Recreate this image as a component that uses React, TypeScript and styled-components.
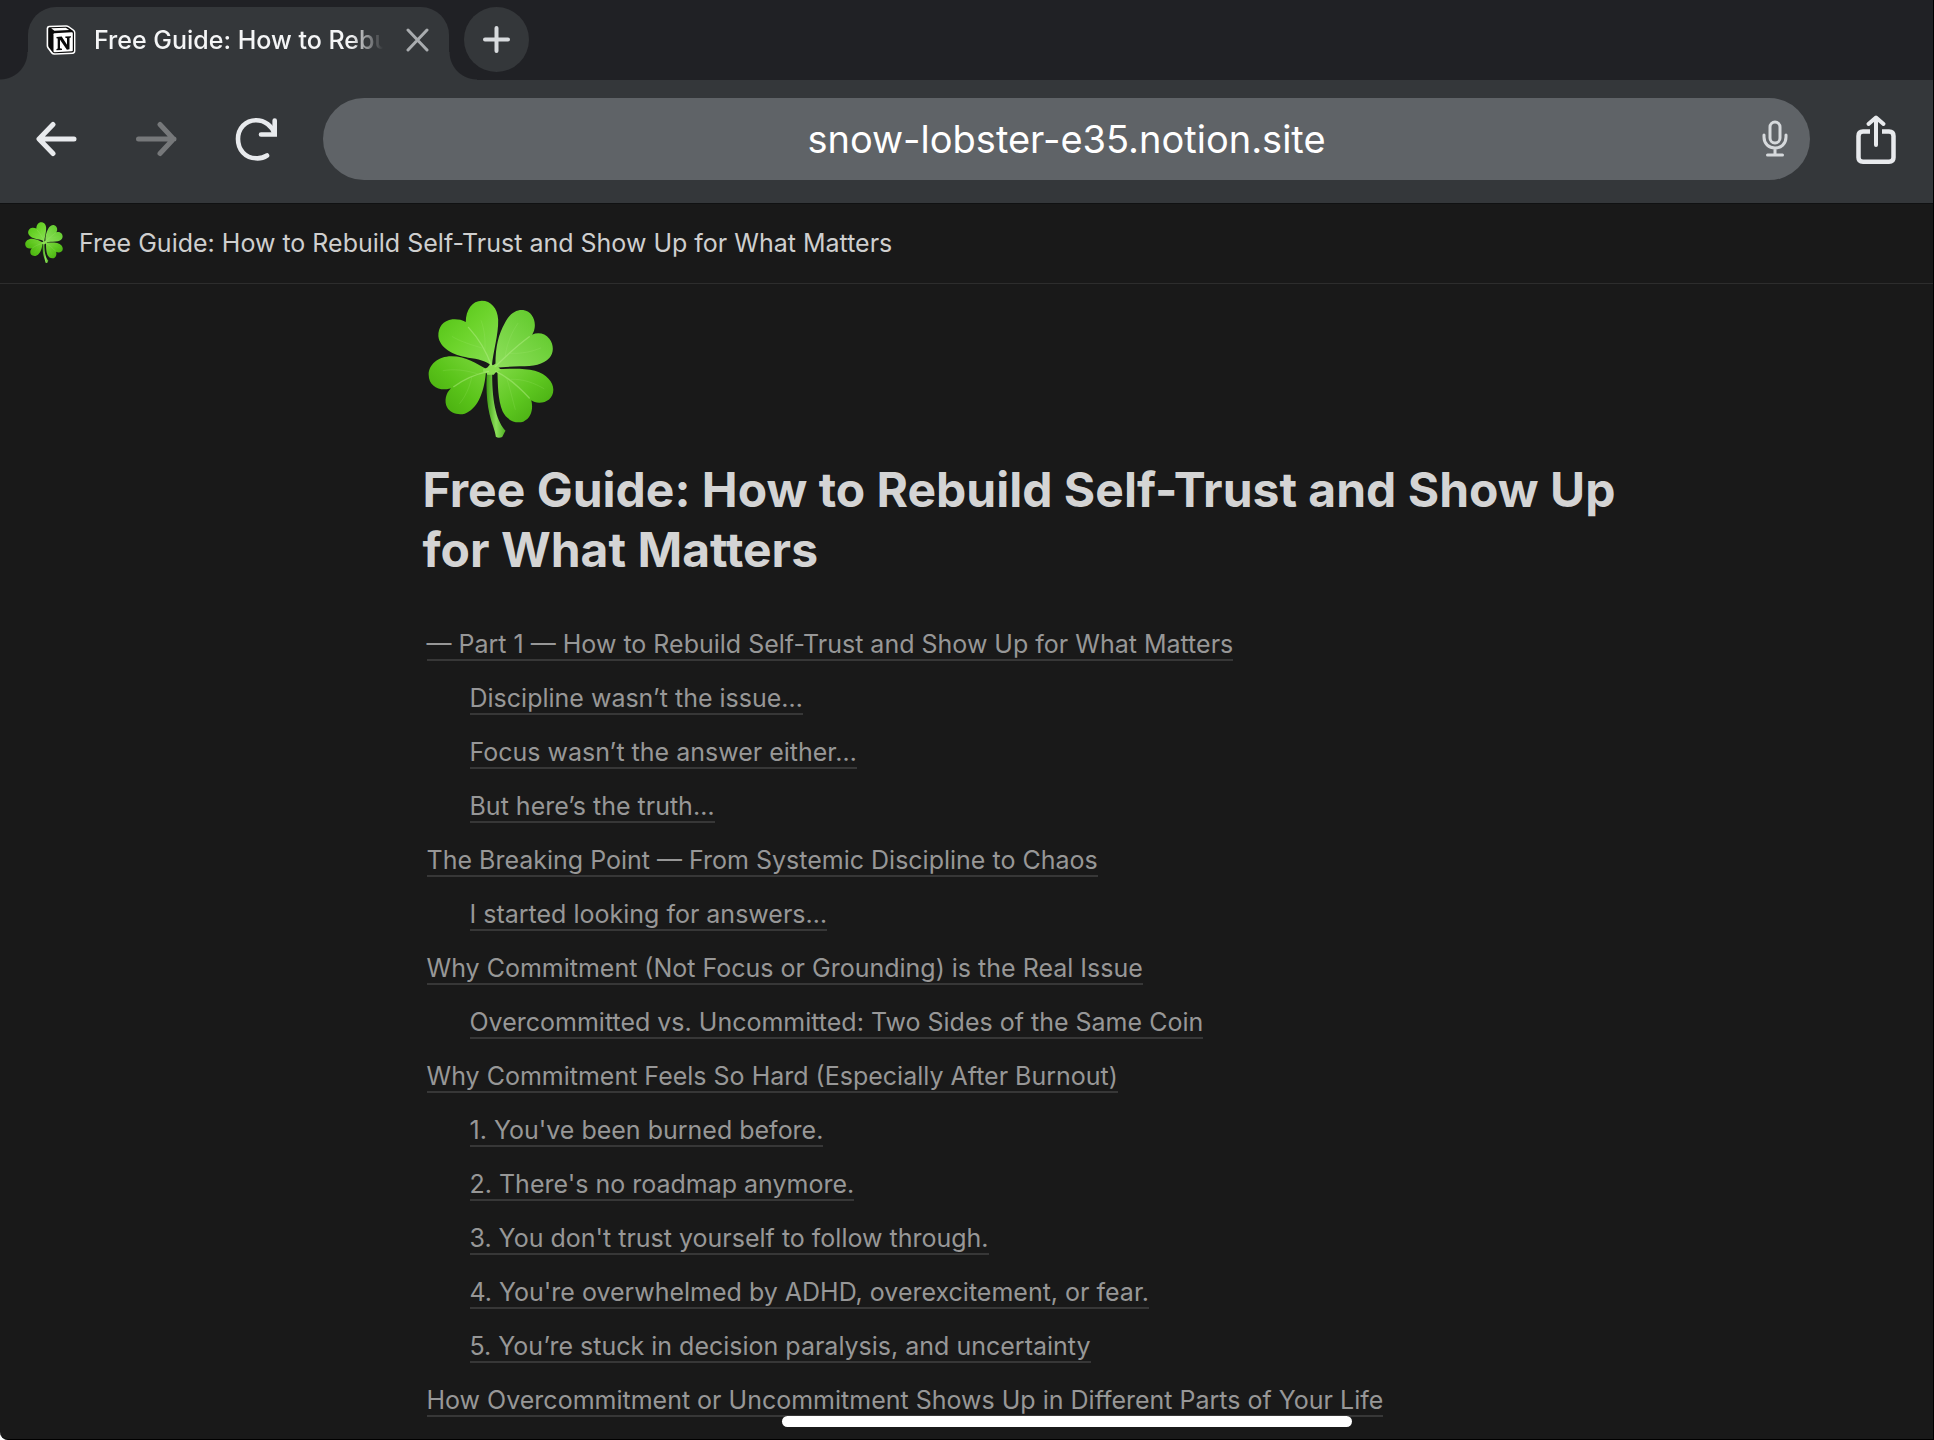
import React from "react";
import styled, { createGlobalStyle, css } from "styled-components";

const GlobalStyle = createGlobalStyle`
  *, *::before, *::after { box-sizing: border-box; }
  html, body { margin: 0; background: #fff; }
  body {
    font-family: Inter, "Liberation Sans", sans-serif;
    overflow: hidden;
  }
  button, input { font: inherit; color: inherit; margin: 0; border: 0; padding: 0; background: none; }
  button { cursor: pointer; }
`;

const Screen = styled.div`
  position: relative;
  height: 100vh;
  overflow: hidden;
  display: flex;
  flex-direction: column;
  background: #191919;
  border-right: 1px solid #000;
  border-bottom: 1px solid #000;
  border-bottom-left-radius: 8px;
`;

const TabStrip = styled.div`
  flex: none;
  display: flex;
  align-items: flex-start;
  gap: 15px;
  height: 80px;
  padding: 7px 28px 0;
  background: #202125;
`;

const Tab = styled.div`
  position: relative;
  display: flex;
  align-items: center;
  width: 421px;
  height: 73px;
  padding: 0 18px 8px;
  border-radius: 28px 28px 0 0;
  background: #34373a;
  color: #f4f5f6;

  &::before,
  &::after {
    content: "";
    position: absolute;
    bottom: 0;
    width: 28px;
    height: 28px;
  }
  &::before {
    right: 100%;
    background: radial-gradient(circle at 0 0, transparent 27px, #34373a 28px);
  }
  &::after {
    left: 100%;
    background: radial-gradient(circle at 100% 0, transparent 27px, #34373a 28px);
  }
`;

const TabTitle = styled.span`
  flex: 1;
  min-width: 0;
  margin: 0 22px 0 18px;
  overflow: hidden;
  white-space: nowrap;
  font-size: 25px;
  line-height: 32px;
  font-weight: 500;
  mask-image: linear-gradient(to right, #000 calc(100% - 32px), transparent);
`;

const IconButton = styled.button`
  flex: none;
  display: grid;
  place-items: center;
  width: ${(p: { $size: number }) => p.$size}px;
  height: ${(p: { $size: number }) => p.$size}px;
`;

const NewTab = styled(IconButton)`
  border-radius: 50%;
  background: #34373a;
`;

const Toolbar = styled.div`
  flex: none;
  display: flex;
  align-items: center;
  height: 124px;
  padding: 0 29px 5px 28px;
  background: #34373a;
  border-bottom: 1px solid #101112;
`;

const NavButtons = styled.div`
  display: flex;
  gap: 42px;
  margin-right: 37px;
`;

const Omnibox = styled.div`
  position: relative;
  flex: 1;
  display: flex;
  height: 82px;
  margin-right: 38px;
  border-radius: 41px;
  background: #5f6367;
`;

const Address = styled.input`
  flex: 1;
  min-width: 0;
  padding: 0 80px;
  border-radius: 41px;
  text-align: center;
  font-size: 38px;
  color: #fff;
  outline: none;
`;

const MicButton = styled(IconButton)`
  position: absolute;
  right: 13px;
  top: 19px;
`;

const PageBar = styled.header`
  flex: none;
  display: flex;
  align-items: center;
  gap: 16px;
  height: 80px;
  padding: 0 25px 2px;
  border-bottom: 1px solid #2d2d2d;
  color: #cfcfcf;
  font-size: 25px;
  line-height: 32px;
`;

const Page = styled.main`
  width: 1400px;
  max-width: 100%;
  margin: 0 auto;
  padding: 16px 13px 0 156px;
`;

const PageIcon = styled.div`
  padding-left: 5px;
  height: 139px;
`;

const Title = styled.h1`
  margin: 21px 0 37px;
  color: #d4d4d4;
  font-size: 48px;
  line-height: 60px;
  font-weight: 700;
`;

const Contents = styled.ul`
  margin: 0;
  padding: 0 0 0 4px;
  list-style: none;
`;

const Entry = styled.li`
  height: 54px;
  line-height: 54px;
  font-size: 25px;
  white-space: nowrap;
  ${(p: { $nested: boolean }) =>
    p.$nested &&
    css`
      padding-left: 43px;
    `}
`;

const EntryLink = styled.a`
  color: #979797;
  text-decoration: none;
  border-bottom: 2px solid #373737;
`;

const HomeIndicator = styled.div`
  position: absolute;
  left: 50%;
  bottom: 12px;
  width: 570px;
  height: 11px;
  margin-left: -185px;
  border-radius: 6px;
  background: #fff;
`;

const Clover = ({ width, height, id }: { width: number; height: number; id: string }) => (
  <svg width={width} height={height} viewBox="55 46 377 414" preserveAspectRatio="none" aria-hidden="true">
    <defs>
      <linearGradient id={id + "a"} x1="0" y1="0" x2="1" y2="1">
        <stop offset="0" stopColor="#4fc012" />
        <stop offset=".5" stopColor="#6dd42c" />
        <stop offset="1" stopColor="#8be058" />
      </linearGradient>
      <linearGradient id={id + "b"} x1="1" y1="0" x2="0" y2="1">
        <stop offset="0" stopColor="#58c522" />
        <stop offset=".5" stopColor="#74d340" />
        <stop offset="1" stopColor="#8ee05c" />
      </linearGradient>
      <linearGradient id={id + "c"} x1="0" y1="1" x2="1" y2="0">
        <stop offset="0" stopColor="#43a60b" />
        <stop offset=".5" stopColor="#5ac41a" />
        <stop offset="1" stopColor="#7dd83e" />
      </linearGradient>
      <linearGradient id={id + "d"} x1="1" y1="1" x2="0" y2="0">
        <stop offset="0" stopColor="#40a40c" />
        <stop offset=".5" stopColor="#5cc51f" />
        <stop offset="1" stopColor="#80da45" />
      </linearGradient>
      <linearGradient id={id + "s"} x1="0" y1="0" x2="1" y2="0">
        <stop offset="0" stopColor="#3f9c14" />
        <stop offset=".5" stopColor="#8be05a" />
        <stop offset="1" stopColor="#4fae22" />
      </linearGradient>
    </defs>
    <path fill={`url(#${id}s)`} d="M232 258C228 300 230 350 239 388C246 418 256 438 258 456C264 461 272 459 277 457C281 449 284 442 287 438C262 410 246 360 247 258Z" />
    <path fill={`url(#${id}a)`} d="M246 244C250 200 266 150 265 105C263 70 243 48 216 48C188 48 168 75 168 112C155 104 140 103 128 104C100 108 85 128 86 155C90 190 130 212 175 219C205 223 230 228 246 244Z" />
    <path fill={`url(#${id}b)`} d="M257 246C256 190 265 150 285 115C300 85 320 74 340 76C365 80 378 105 374 130C372 142 368 148 366 150C385 142 405 146 418 162C432 180 432 205 418 220C400 240 370 245 330 245C300 246 275 246 256 250Z" />
    <path fill={`url(#${id}c)`} d="M232 254C200 238 170 215 125 215C85 215 57 240 57 270C57 298 78 314 105 314C115 314 122 312 124 311C108 325 103 350 112 368C122 386 145 392 165 387C200 375 222 330 228 266Z" />
    <path fill={`url(#${id}d)`} d="M256 254C300 252 340 250 375 258C410 268 430 292 430 315C430 340 410 354 388 354C378 354 370 351 364 347C370 370 366 400 340 411C315 418 290 405 278 380C264 345 264 300 263 266Z" />
    <path fill="#8be052" d="M220 252Q236 252 242 234L249 242L262 234Q262 248 276 256Q260 258 252 270L232 270Q232 262 220 262Z" />
    <g fill="none" stroke="#b9f08c" strokeLinecap="round" opacity=".45">
      <path strokeWidth="4" d="M244 242C230 200 205 160 176 128M256 246C290 212 325 180 358 156M236 260C200 268 160 285 132 306M258 260C292 276 330 310 358 340" />
      <path strokeWidth="2" opacity=".5" d="M225 196C228 160 222 130 214 108M216 190C190 182 150 170 128 156M286 214C292 170 308 140 324 116M300 206C335 208 370 200 392 190M204 268C170 256 130 252 100 258M186 276C180 310 164 340 150 356M290 278C300 310 308 345 316 374M304 284C340 282 375 296 402 312" />
    </g>
  </svg>
);

const NotionLogo = () => (
  <svg width="30" height="30" viewBox="0 0 30 30" aria-hidden="true">
    <path d="M3 .8L20 .2Q21.500 .1 22.800 1L28 4.800Q29.400 6 29.400 7.500V26Q29.400 28.700 26.500 28.900L8.500 29.800Q6.500 29.900 5.300 28.400L1.400 23.300Q.6 22.200 .6 20.800V3.300Q.6 1 3 .8Z" fill="#fff" />
    <path d="M3.400 2.300L19.800 1.700Q21 1.600 22 2.300L27 5.800Q28 6.500 28 8V25.500Q28 27.400 26.200 27.500L9 28.300Q7.500 28.300 6.600 27.300L2.900 22.600Q2.200 21.700 2.200 20.500V3.700Q2.200 2.400 3.400 2.300Z" fill="#0b0b0b" />
    <path d="M5.200 3.300L19.800 2.800L23.200 4.900L8.400 5.700Z" fill="#fff" />
    <path d="M8.500 8.200L25.800 7.200Q26.800 7.200 26.800 8.200V25.200Q26.800 26.200 25.800 26.300L8.500 27.200Q7.500 27.200 7.500 26.200V9.200Q7.500 8.300 8.500 8.200Z" fill="#fff" />
    <path d="M10.500 12L15.700 11.600L21 19.800V13.200L19.300 12.700V11.500L25 11.200V12.300L23.500 12.900V24.200L20.900 24.700L14 14.800V23.200L16 23.800V25L10.400 25.300V24.200L11.700 23.600V13.600L10.500 13.200Z" fill="#0b0b0b" />
  </svg>
);

const stroke = { fill: "none", strokeLinecap: "round", strokeLinejoin: "round" } as const;

const CloseIcon = () => (
  <svg width="24" height="26" viewBox="0 0 24 26" {...stroke} stroke="#a9acaf" strokeWidth="3">
    <path d="M2 3L21 23M21 3L2 23" />
  </svg>
);

const PlusIcon = () => (
  <svg width="28" height="28" viewBox="0 0 28 28" {...stroke} stroke="#d8dbde" strokeWidth="4">
    <path d="M13.500 2V25M2 13.500H25" />
  </svg>
);

const ArrowIcon = ({ forward = false }: { forward?: boolean }) => (
  <svg width="42" height="36" viewBox="0 0 42 36" {...stroke} stroke={forward ? "#76787a" : "#e8eaed"} strokeWidth="5">
    <path d={forward ? "M2.500 18H38M24 3.500L37.500 18L24 32.500" : "M38 18H4M17 3.500L3 18L17 32.500"} />
  </svg>
);

const ReloadIcon = () => (
  <svg width="44" height="44" viewBox="0 0 44 44" {...stroke} stroke="#e8eaed" strokeWidth="4.600">
    <path d="M32 38.500C28 41.200 24 41.500 21 41.300C10 41 3 32.500 3 22C3 11.500 10.500 3.200 21 3.200C30 3.200 37 9 39.500 16.500" />
    <path d="M39.700 3.500V17.500H26" strokeLinejoin="miter" />
  </svg>
);

const MicIcon = () => (
  <svg width="26" height="38" viewBox="0 0 26 38" {...stroke} stroke="#d6d9dc" strokeWidth="3">
    <rect x="8" y="2" width="10" height="21" rx="5" />
    <path d="M2 15V17C2 24 7 28 13 28S24 24 24 17V15M13 28V35M5.500 35H20.500" />
  </svg>
);

const ShareIcon = () => (
  <svg width="40" height="50" viewBox="0 0 40 50" {...stroke} stroke="#e8eaed" strokeWidth="4.500">
    <path strokeLinecap="butt" d="M14 17.500H7Q2.500 17.500 2.500 22V43.500Q2.500 47.700 7 47.700H33Q37.500 47.700 37.500 43.500V22Q37.500 17.500 33 17.500H26" />
    <path d="M20 4.500V31M12.500 10L20 3.500L27.500 10" strokeWidth="4" />
  </svg>
);

const entries: { text: string; nested?: boolean }[] = [
  { text: "— Part 1 — How to Rebuild Self-Trust and Show Up for What Matters" },
  { text: "Discipline wasn’t the issue…", nested: true },
  { text: "Focus wasn’t the answer either…", nested: true },
  { text: "But here’s the truth…", nested: true },
  { text: "The Breaking Point — From Systemic Discipline to Chaos" },
  { text: "I started looking for answers…", nested: true },
  { text: "Why Commitment (Not Focus or Grounding) is the Real Issue" },
  { text: "Overcommitted vs. Uncommitted: Two Sides of the Same Coin", nested: true },
  { text: "Why Commitment Feels So Hard (Especially After Burnout)" },
  { text: "1. You've been burned before.", nested: true },
  { text: "2. There's no roadmap anymore.", nested: true },
  { text: "3. You don't trust yourself to follow through.", nested: true },
  { text: "4. You're overwhelmed by ADHD, overexcitement, or fear.", nested: true },
  { text: "5. You’re stuck in decision paralysis, and uncertainty", nested: true },
  { text: "How Overcommitment or Uncommitment Shows Up in Different Parts of Your Life" },
];

const guideTitle = "Free Guide: How to Rebuild Self-Trust and Show Up for What Matters";

export default function App() {
  return (
    <>
      <GlobalStyle />
      <Screen>
        <TabStrip>
          <Tab>
            <NotionLogo />
            <TabTitle>{guideTitle}</TabTitle>
            <IconButton $size={26} aria-label="Close tab"><CloseIcon /></IconButton>
          </Tab>
          <NewTab $size={65} aria-label="New tab"><PlusIcon /></NewTab>
        </TabStrip>
        <Toolbar>
          <NavButtons>
            <IconButton $size={58} aria-label="Back"><ArrowIcon /></IconButton>
            <IconButton $size={58} aria-label="Forward" disabled><ArrowIcon forward /></IconButton>
            <IconButton $size={58} aria-label="Reload"><ReloadIcon /></IconButton>
          </NavButtons>
          <Omnibox>
            <Address aria-label="Address" defaultValue="snow-lobster-e35.notion.site" spellCheck={false} />
            <MicButton $size={44} aria-label="Voice search"><MicIcon /></MicButton>
          </Omnibox>
          <IconButton $size={56} aria-label="Share"><ShareIcon /></IconButton>
        </Toolbar>
        <PageBar>
          <Clover width={38} height={41} id="bar" />
          <span>{guideTitle}</span>
        </PageBar>
        <Page>
          <PageIcon><Clover width={126} height={138} id="page" /></PageIcon>
          <Title>{guideTitle}</Title>
          <nav aria-label="Table of contents">
            <Contents>
              {entries.map((entry) => (
                <Entry key={entry.text} $nested={!!entry.nested}>
                  <EntryLink href="#">{entry.text}</EntryLink>
                </Entry>
              ))}
            </Contents>
          </nav>
        </Page>
        <HomeIndicator />
      </Screen>
    </>
  );
}
